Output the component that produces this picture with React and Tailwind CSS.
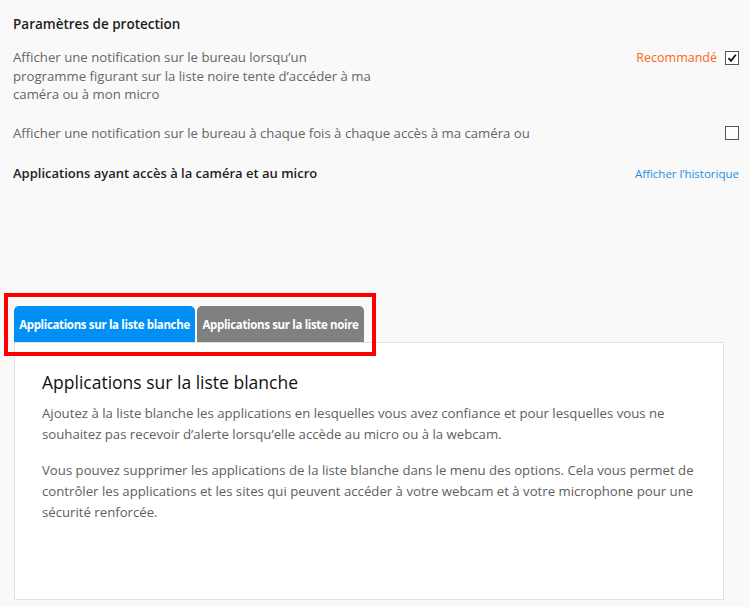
import { useState } from "react";

const font = { fontFamily: '"Open Sans", "Noto Sans", sans-serif' };

function Checkbox({ checked, onChange }) {
  return (
    <button
      onClick={onChange}
      className="w-[14px] h-[14px] border border-[#555] bg-white flex items-center justify-center shrink-0"
    >
      {checked && (
        <svg width="10" height="10" viewBox="0 0 10 10">
          <path d="M1.5 5.2 L4 7.8 L8.8 1.8" fill="none" stroke="#111" strokeWidth="1.8" />
        </svg>
      )}
    </button>
  );
}

export default function App() {
  const [notifyBlacklist, setNotifyBlacklist] = useState(true);
  const [notifyAll, setNotifyAll] = useState(false);
  const [tab, setTab] = useState("white");

  return (
    <div className="relative w-[750px] h-[607px] bg-[#f9f9f9] overflow-hidden" style={font}>
      <div className="pl-[13px] pr-[11px] pt-[14px]">
        <h2 className="text-[13.5px] font-semibold text-[#1e1e1e] leading-[20px]">Paramètres de protection</h2>

        <div className="flex justify-between items-start mt-[14px]">
          <p className="text-[13.2px] text-[#666] leading-[18.7px] w-[362px]">
            Afficher une notification sur le bureau lorsqu’un programme figurant sur la liste noire tente d’accéder à ma caméra ou à mon micro
          </p>
          <div className="flex items-center gap-[8px] mt-[1px]">
            <span className="text-[12.5px] text-[#ff6622]">Recommandé</span>
            <Checkbox checked={notifyBlacklist} onChange={() => setNotifyBlacklist(!notifyBlacklist)} />
          </div>
        </div>

        <div className="flex justify-between items-center mt-[20px]">
          <p className="text-[13.2px] text-[#666] leading-[18.7px]">
            Afficher une notification sur le bureau à chaque fois à chaque accès à ma caméra ou
          </p>
          <Checkbox checked={notifyAll} onChange={() => setNotifyAll(!notifyAll)} />
        </div>

        <div className="flex justify-between items-center mt-[21px]">
          <h3 className="text-[13px] font-semibold text-[#1e1e1e]">Applications ayant accès à la caméra et au micro</h3>
          <a className="text-[11.5px] text-[#1a8fe6] cursor-pointer">Afficher l’historique</a>
        </div>
      </div>

      <div className="flex items-end gap-[2px] pl-[14px] mt-[123px]">
        <button
          onClick={() => setTab("white")}
          className={`h-[36px] w-[181px] rounded-t-[5px] text-white text-[11.5px] font-bold tracking-[-0.35px] whitespace-nowrap ${tab === "white" ? "bg-[#0090f5]" : "bg-[#808080]"}`}
        >
          Applications sur la liste blanche
        </button>
        <button
          onClick={() => setTab("black")}
          className={`h-[36px] w-[167px] rounded-t-[5px] text-white text-[11.5px] font-bold tracking-[-0.35px] whitespace-nowrap ${tab === "black" ? "bg-[#0090f5]" : "bg-[#808080]"}`}
        >
          Applications sur la liste noire
        </button>
      </div>

      <div className="mx-[14px] w-[710px] h-[258px] bg-white border border-[#e2e2e2] px-[27px] pt-[27px]">
        <h1 className="text-[17.5px] font-medium text-[#111] leading-[24px]">
          {tab === "white" ? "Applications sur la liste blanche" : "Applications sur la liste noire"}
        </h1>
        <div className="mt-[9px] text-[13.2px] text-[#606060] leading-[21px] space-y-[15px]">
          <p>
            Ajoutez à la liste blanche les applications en lesquelles vous avez confiance et pour lesquelles vous ne souhaitez pas recevoir d’alerte lorsqu’elle accède au micro ou à la webcam.
          </p>
          <p>
            Vous pouvez supprimer les applications de la liste blanche dans le menu des options. Cela vous permet de contrôler les applications et les sites qui peuvent accéder à votre webcam et à votre microphone pour une sécurité renforcée.
          </p>
        </div>
      </div>

      {/* annotation box drawn over the tab strip */}
      <div className="absolute left-[4px] top-[293px] w-[372px] h-[63px] border-4 border-[#ff0000] pointer-events-none" />
    </div>
  );
}
